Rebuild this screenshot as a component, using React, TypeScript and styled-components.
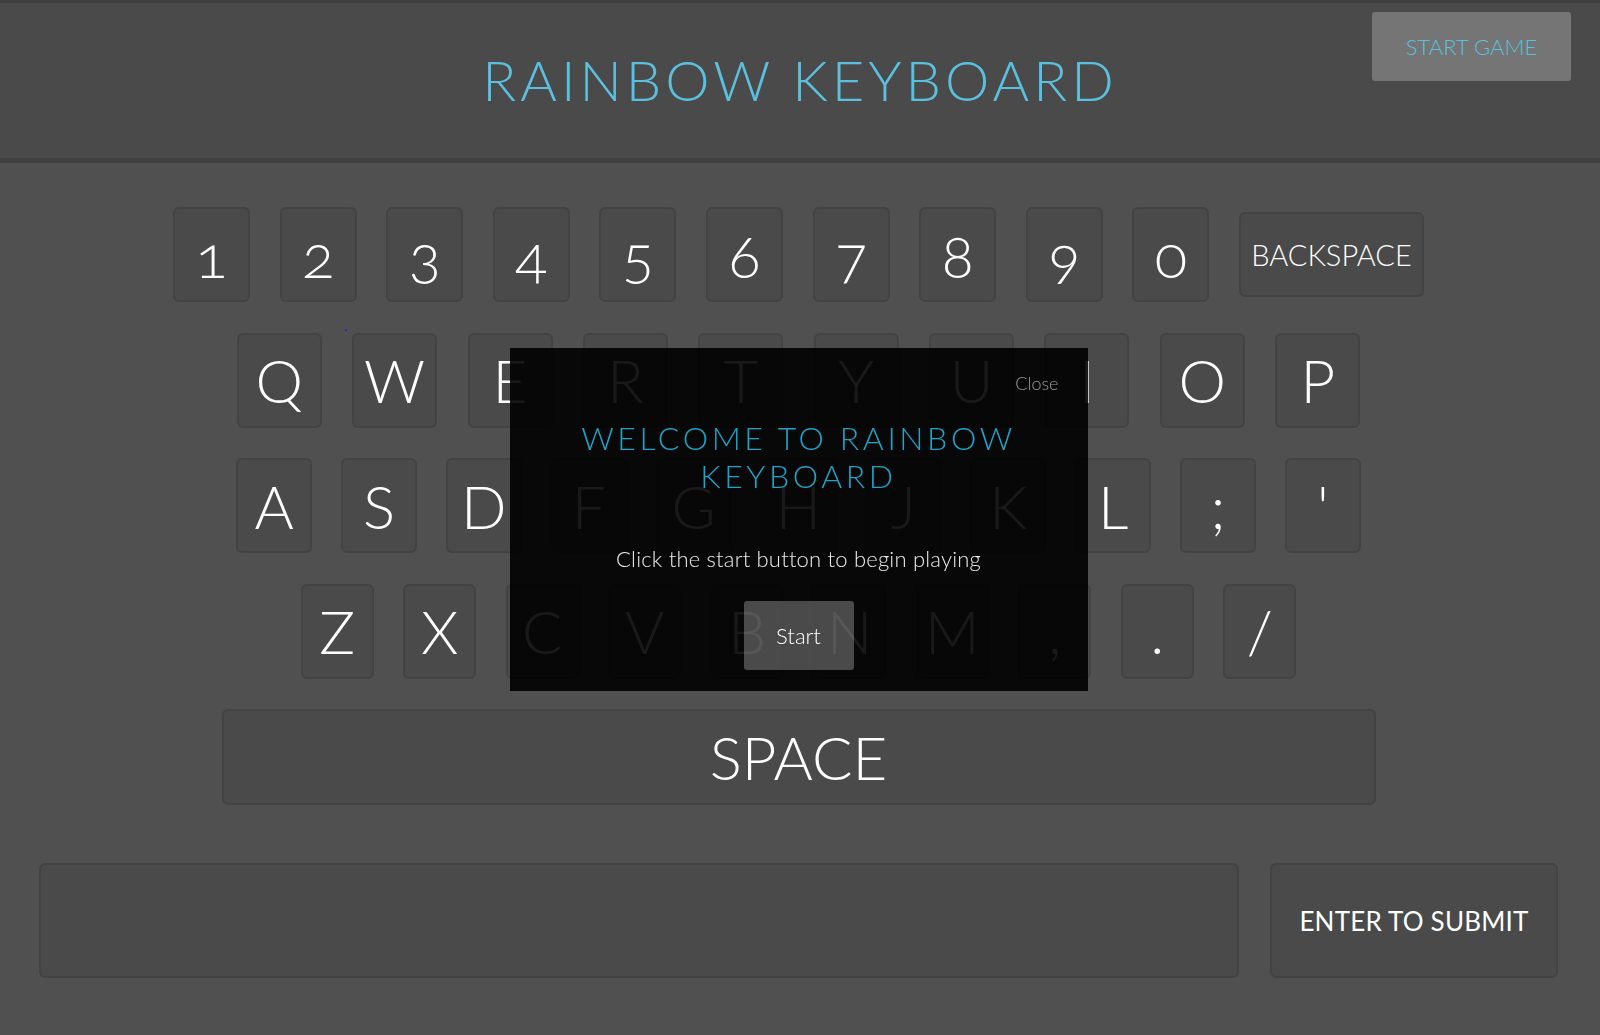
import React from "react";
import styled, { createGlobalStyle } from "styled-components";

const GlobalStyle = createGlobalStyle`
  html, body {
    margin: 0;
    padding: 0;
    background: #505050;
    font-family: "Lato", "Open Sans", sans-serif;
    overflow: hidden;
  }
  * { box-sizing: border-box; }
`;

const Page = styled.div`
  width: 1600px;
  height: 1035px;
  background: #505050;
  position: relative;
`;

const Header = styled.header`
  display: grid;
  grid-template-columns: 1fr auto 1fr;
  height: 163px;
  background: #4a4a4a;
  border-top: 3px solid #3f3f3f;
  border-bottom: 5px solid #404040;
`;

const Title = styled.h1`
  grid-column: 2;
  align-self: center;
  margin: 0;
  padding-bottom: 2px;
  font-size: 56px;
  font-weight: 300;
  letter-spacing: 4px;
  color: #5bc0de;
  white-space: nowrap;
`;

const StartGame = styled.button`
  grid-column: 3;
  justify-self: end;
  align-self: start;
  margin: 9px 29px 0 0;
  width: 199px;
  height: 69px;
  border: none;
  border-radius: 3px;
  background: #757575;
  color: #5bc0de;
  font-family: inherit;
  font-size: 22px;
  font-weight: 300;
  letter-spacing: 0;
`;

const Main = styled.main`
  position: relative;
  padding: 44px 42px 0 39px;
`;

const Keyboard = styled.div`
  display: flex;
  flex-direction: column;
  align-items: center;
  gap: 30.5px;
`;

const Row = styled.div<{ $gap: number }>`
  display: flex;
  align-items: center;
  justify-content: center;
  gap: ${(p) => p.$gap}px;
`;

const Key = styled.button<{ $w: number; $h?: number; $size?: number }>`
  width: ${(p) => p.$w}px;
  height: ${(p) => p.$h ?? 95}px;
  display: flex;
  align-items: center;
  justify-content: center;
  padding: 0;
  background: #4a4a4a;
  border: 2px solid #434343;
  border-radius: 6px;
  color: #ffffff;
  font-family: inherit;
  font-size: ${(p) => p.$size ?? 60}px;
  font-weight: 300;
  line-height: 1;
  font-variant-numeric: oldstyle-nums;
  white-space: nowrap;
`;

const BottomRow = styled.div`
  display: flex;
  gap: 31px;
  margin-top: 58px;
`;

const Input = styled.div`
  flex: 1;
  height: 115px;
  background: #4a4a4a;
  border: 2px solid #434343;
  border-radius: 6px;
`;

const Submit = styled.button`
  width: 288px;
  height: 115px;
  background: #4a4a4a;
  border: 2px solid #434343;
  border-radius: 6px;
  color: #ffffff;
  font-family: inherit;
  font-size: 26px;
  font-weight: 400;
  letter-spacing: 0.2px;
`;

const Dot = styled.span`
  position: absolute;
  left: 345px;
  top: 166px;
  width: 2px;
  height: 2px;
  background: #2020ff;
`;

const Overlay = styled.div`
  position: fixed;
  inset: 0;
  display: flex;
  align-items: center;
  justify-content: center;
  padding: 0 3px 0 0;
`;

const Modal = styled.div`
  width: 578px;
  height: 343px;
  margin-top: 3px;
  background: rgba(0, 0, 0, 0.9);
  padding: 24px 29px 21px;
  display: flex;
  flex-direction: column;
  align-items: center;
  text-align: center;
`;

const Close = styled.div`
  align-self: flex-end;
  font-size: 18px;
  line-height: 22px;
  font-weight: 300;
  color: #9a9a9a;
`;

const ModalTitle = styled.h2`
  margin: 25px 0 0;
  max-width: 470px;
  font-size: 32px;
  line-height: 38.7px;
  font-weight: 300;
  letter-spacing: 3.6px;
  color: #1fa3c8;
`;

const ModalText = styled.p`
  margin: 50px 0 0;
  font-size: 22px;
  line-height: 26px;
  font-weight: 300;
  letter-spacing: 0.2px;
  color: #ececec;
`;

const StartButton = styled.button`
  margin-top: 29px;
  width: 110px;
  height: 69px;
  border: none;
  border-radius: 3px;
  background: rgba(255, 255, 255, 0.27);
  color: #ffffff;
  font-family: inherit;
  font-size: 22px;
  font-weight: 300;
`;

const rows: { keys: string[]; w: number; gap: number }[] = [
  { keys: ["Q", "W", "E", "R", "T", "Y", "U", "I", "O", "P"], w: 85, gap: 30.4 },
  { keys: ["A", "S", "D", "F", "G", "H", "J", "K", "L", ";", "'"], w: 76, gap: 28.9 },
  { keys: ["Z", "X", "C", "V", "B", "N", "M", ",", ".", "/"], w: 73, gap: 29.5 },
];

const digits = ["1", "2", "3", "4", "5", "6", "7", "8", "9", "0"];

export default function App() {
  return (
    <Page>
      <GlobalStyle />
      <Header>
        <Title>RAINBOW KEYBOARD</Title>
        <StartGame>START GAME</StartGame>
      </Header>
      <Main>
        <Dot />
        <Keyboard>
          <Row $gap={29.6}>
            {digits.map((d) => (
              <Key key={d} $w={77}>
                {d}
              </Key>
            ))}
            <Key $w={185} $h={85} $size={29}>
              BACKSPACE
            </Key>
          </Row>
          {rows.map((r, i) => (
            <Row key={i} $gap={r.gap}>
              {r.keys.map((k) => (
                <Key key={k} $w={r.w}>
                  {k}
                </Key>
              ))}
            </Row>
          ))}
          <Row $gap={0}>
            <Key $w={1154} $h={96}>
              SPACE
            </Key>
          </Row>
        </Keyboard>
        <BottomRow>
          <Input />
          <Submit>ENTER TO SUBMIT</Submit>
        </BottomRow>
      </Main>
      <Overlay>
        <Modal>
          <Close>Close</Close>
          <ModalTitle>WELCOME TO RAINBOW KEYBOARD</ModalTitle>
          <ModalText>Click the start button to begin playing</ModalText>
          <StartButton>Start</StartButton>
        </Modal>
      </Overlay>
    </Page>
  );
}
